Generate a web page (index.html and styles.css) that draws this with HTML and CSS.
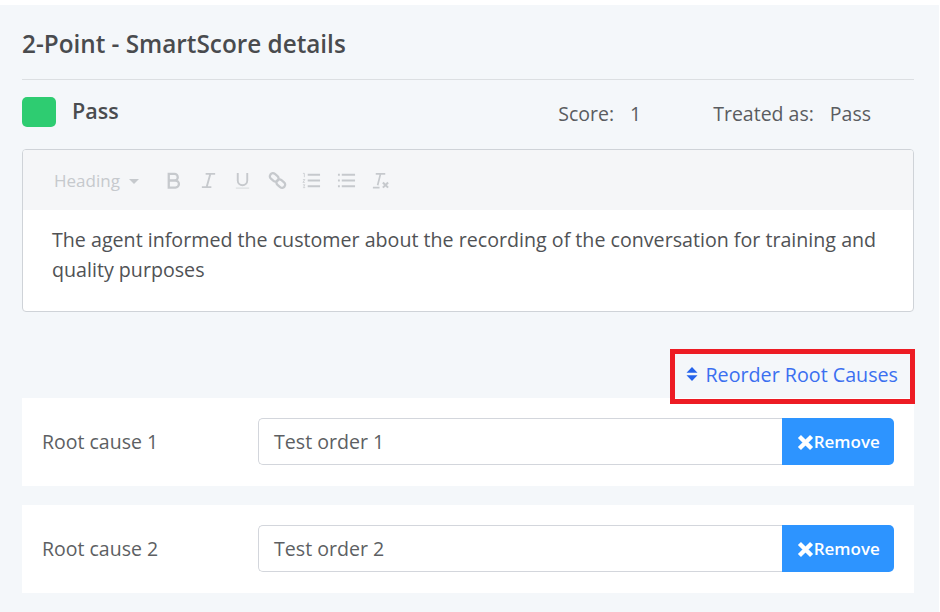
FILE: index.html
```html
<!DOCTYPE html>
<html lang="en">
<head>
<meta charset="utf-8">
<title>SmartScore details</title>
<link rel="stylesheet" href="styles.css">
</head>
<body>
<main class="panel">
  <h2 class="title">2-Point - SmartScore details</h2>
  <div class="status-row">
    <span class="swatch"></span>
    <strong class="status-name">Pass</strong>
    <div class="meta">
      <span class="meta-item"><span>Score:</span><span>1</span></span>
      <span class="meta-item"><span>Treated as:</span><span>Pass</span></span>
    </div>
  </div>
  <section class="editor">
    <div class="toolbar">
      <span class="heading">Heading<i class="caret"></i></span>
      <svg class="tool" viewBox="0 0 20 20"><path d="M5 3h6a3.500 3.500 0 0 1 0 7H5zM5 10h7a3.700 3.700 0 0 1 0 7.400H5z" fill="none" stroke="#c6c9cd" stroke-width="2.400"/></svg>
      <svg class="tool" viewBox="0 0 20 20"><path d="M7 3h10M3 17h10M12 3 8 17" fill="none" stroke="#c6c9cd" stroke-width="2"/></svg>
      <svg class="tool" viewBox="0 0 20 20"><path d="M5 2v8a5 5 0 0 0 10 0V2" fill="none" stroke="#c6c9cd" stroke-width="2"/><path d="M3 18h14" stroke="#dcdfe2" stroke-width="1.400"/></svg>
      <svg class="tool" viewBox="0 0 20 20"><g fill="none" stroke="#c6c9cd" stroke-width="2.400"><rect x="1.500" y="3.500" width="10" height="6.500" rx="3.200" transform="rotate(40 6.500 6.800)"/><rect x="8.500" y="10" width="10" height="6.500" rx="3.200" transform="rotate(40 13.500 13.200)"/></g></svg>
      <svg class="tool" viewBox="0 0 20 20"><path d="M6 4h13M6 10h13M6 16h13" stroke="#c6c9cd" stroke-width="2"/><path d="M1 2.500h1.500v4M1 9h2l-2 3h2M1 14.500h2l-1 1.500 1 1.500H1" fill="none" stroke="#c6c9cd" stroke-width=".8"/></svg>
      <svg class="tool" viewBox="0 0 20 20"><path d="M5 4h14M5 10h14M5 16h14" stroke="#c6c9cd" stroke-width="2"/><path d="M1 4h2M1 10h2M1 16h2" stroke="#c6c9cd" stroke-width="2"/></svg>
      <svg class="tool" viewBox="0 0 20 20"><path d="M5 3h10M10 3 7 15M2 17.500h7" fill="none" stroke="#c6c9cd" stroke-width="1.800"/><path d="m12.500 12 5.500 5.500m0-5.500-5.500 5.500" stroke="#c6c9cd" stroke-width="2.200"/></svg>
    </div>
    <p class="editor-text">The agent informed the customer about the recording of the conversation for training and quality purposes</p>
  </section>
  <div class="reorder-row">
    <a class="reorder" href="#">
      <svg class="sort" viewBox="0 0 12 16"><path d="M6 1 11.500 6.800H.5zM6 15 .5 9.200h11z" fill="#2563eb"/></svg>
      Reorder Root Causes
    </a>
  </div>
  <div class="cause">
    <span class="cause-label">Root cause 1</span>
    <div class="input-group">
      <span class="field">Test order 1</span>
      <button class="remove" type="button"><svg class="x" viewBox="0 0 14 14"><path d="m2 2 10 10M12 2 2 12" stroke="#fff" stroke-width="3.600"/></svg>Remove</button>
    </div>
  </div>
  <div class="cause">
    <span class="cause-label">Root cause 2</span>
    <div class="input-group">
      <span class="field">Test order 2</span>
      <button class="remove" type="button"><svg class="x" viewBox="0 0 14 14"><path d="m2 2 10 10M12 2 2 12" stroke="#fff" stroke-width="3.600"/></svg>Remove</button>
    </div>
  </div>
</main>
</body>
</html>
```
FILE: styles.css
```css
* { box-sizing: border-box; }
html, body { margin: 0; height: 100%; background: #fff; overflow: hidden; }
body { padding-top: 5px; font-family: "Open Sans", "Liberation Sans", sans-serif; color: #4d4f52; }
.panel { height: 607px; margin-right: 1px; padding: 0 25px 0 22px; background: #f4f7fa; }
.title { margin: 0; height: 75px; padding-top: 22px; font-size: 24.300px; line-height: 34px; font-weight: 600; color: #494b4e; border-bottom: 1px solid #dcdfe2; }
.status-row { display: flex; align-items: center; height: 69px; padding-bottom: 6px; }
.swatch { width: 34px; height: 30px; border-radius: 5px; background: #2ecc71; }
.status-name { margin-left: 16px; margin-bottom: 2px; font-size: 21.500px; font-weight: 600; color: #4a4c4f; }
.meta { display: flex; gap: 72px; margin-left: auto; margin-right: 43px; padding-top: 4px; font-size: 19.500px; color: #5a5c60; }
.meta-item { display: flex; gap: 16px; }
.editor { height: 163px; background: #fff; border: 1px solid #cfd3d8; border-radius: 4px; overflow: hidden; }
.toolbar { display: flex; align-items: center; height: 60px; padding-left: 31px; background: #f5f6f8; }
.heading { display: flex; align-items: center; width: 110px; font-size: 17px; color: #c6c9cd; }
.caret { margin: 3px 0 0 9px; border: 5px solid transparent; border-top-color: #c6c9cd; border-bottom: 0; }
.tool { width: 19px; height: 19px; margin-right: 15.500px; }
.editor-text { margin: 0; padding: 15px 28px 15px 29px; font-size: 19.650px; line-height: 30px; color: #505255; }
.reorder-row { display: flex; justify-content: flex-end; height: 86px; padding: 42px 16px 0 0; }
.reorder { position: relative; display: flex; align-items: center; gap: 7px; height: 40px; font-size: 19.700px; color: #3b6ff0; text-decoration: none; }
.reorder::after { content: ""; position: absolute; inset: -5px -17px -10px -16px; border: 5.500px solid #ed1c24; }
.sort { width: 12px; height: 16px; }
.cause { display: flex; align-items: center; height: 87.500px; margin-bottom: 19.500px; padding: 0 20px 1px; background: #fff; }
.cause-label { width: 216px; font-size: 19.500px; color: #5d5f63; }
.input-group { display: flex; flex: 1; height: 47px; }
.field { flex: 1; display: flex; align-items: center; padding-left: 15px; font-size: 19.600px; color: #5d5f63; background: #fff; border: 1.500px solid #d3d6dc; border-right: 0; border-radius: 5px 0 0 5px; }
.remove { display: flex; align-items: center; justify-content: center; width: 112.500px; padding: 0 0 0 1px; border: 0; border-radius: 0 5px 5px 0; background: #2d94ff; color: #fff; font: 600 17px "Open Sans", "Liberation Sans", sans-serif; }
.x { width: 17px; height: 17px; margin-top: 2px; }
```
